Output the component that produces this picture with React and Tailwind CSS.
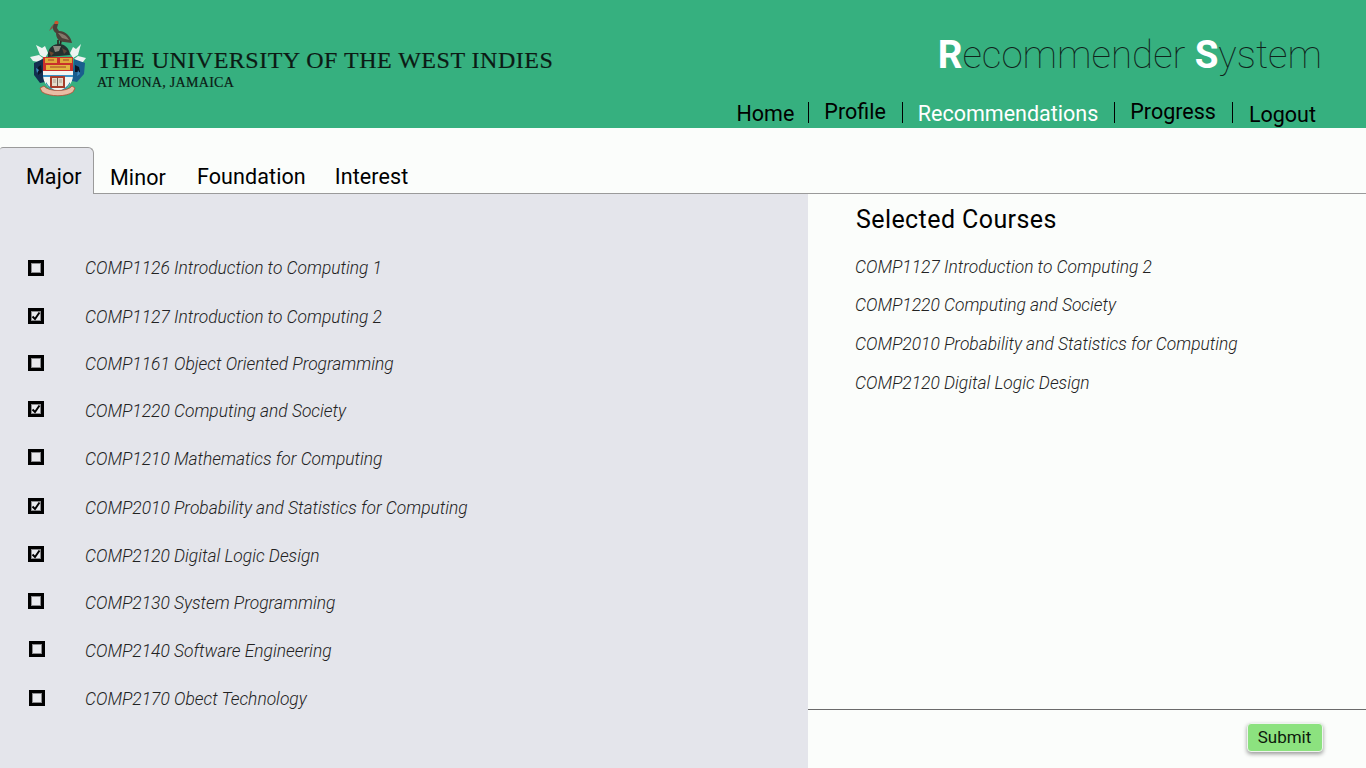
import React from 'react';

const courses = [
    { name: 'COMP1126 Introduction to Computing 1', row: 'h-[49px]', box: 'mt-[2px] ml-0 mr-[41px]' },
    { name: 'COMP1127 Introduction to Computing 2', row: 'h-[47px]', box: 'mt-[1px] ml-0 mr-[41px]', checked: true },
    { name: 'COMP1161 Object Oriented Programming', row: 'h-[47px]', box: 'mt-[1px] ml-0 mr-[41px]' },
    { name: 'COMP1220 Computing and Society', row: 'h-[48px]', box: 'mt-0 ml-0 mr-[41px]', checked: true },
    { name: 'COMP1210 Mathematics for Computing', row: 'h-[49px]', box: 'mt-0 ml-0 mr-[41px]' },
    { name: 'COMP2010 Probability and Statistics for Computing', row: 'h-[48px]', box: 'mt-0 ml-0 mr-[41px]', checked: true },
    { name: 'COMP2120 Digital Logic Design', row: 'h-[47px]', box: 'mt-0 ml-0 mr-[41px]', checked: true },
    { name: 'COMP2130 System Programming', row: 'h-[48px]', box: 'mt-0 ml-0 mr-[41px]' },
    { name: 'COMP2140 Software Engineering', row: 'h-[48px]', box: 'mt-0 ml-px mr-[40px]' },
    { name: 'COMP2170 Obect Technology', row: 'h-[48px]', box: 'mt-[1px] ml-px mr-[40px]' },
];

const selected = [
    { name: 'COMP1127 Introduction to Computing 2', row: 'h-[38px]' },
    { name: 'COMP1220 Computing and Society', row: 'h-[39px]' },
    { name: 'COMP2010 Probability and Statistics for Computing', row: 'h-[39px]' },
    { name: 'COMP2120 Digital Logic Design', row: 'h-[39px]' },
];

function Crest() {
    return (
        <svg width="60" height="80" viewBox="0 0 60 80" className="shrink-0">
            {/* pelican */}
            <path d="M28 1.5 L23 7 L21 11 L25 8 L29 5 Z" fill="#7a5a48" />
            <circle cx="28.5" cy="2.8" r="2.1" fill="#c9552c" />
            <path d="M26 4 C24 8 25 11 28 13 C28 18 31 22 36 22 L44 23 C43 17 38 11 31 11 L29 8 L30 4 Z" fill="#4b4038" />
            <path d="M30 13 C34 13 38 15 41 20 L34 18 Z" fill="#85786a" />
            <path d="M30 20 L30 26 M33 21 L32 26" stroke="#2c241e" strokeWidth="1.6" />
            {/* helm and wreath */}
            <path d="M20 33 C21 27 26 24 31 24 C37 24 41 28 42 35 L20 37 Z" fill="#25302f" />
            <path d="M25 26 L33 26 L31 31 L27 32 Z" fill="#8c8a80" />
            <path d="M34 28 L39 31 L36 34 Z" fill="#5c4a3c" />
            <path d="M21 31 L26 33 L23 36 Z" fill="#6e4630" />
            {/* doves and mantling */}
            <path d="M8 25 L14 28 L17 26 L20 33 L17 38 L12 35 Z" fill="#edf4f1" />
            <path d="M53 24 L48 29 L45 27 L42 33 L45 38 L50 35 Z" fill="#edf4f1" />
            <path d="M2 37 L11 35 L15 38 L11 42 L5 41 Z" fill="#eef3f2" />
            <path d="M58 38 L50 36 L46 39 L50 42 L55 42 Z" fill="#eef3f2" />
            <path d="M6 43 L15 39 L17 62 L12 63 L6 55 Z" fill="#132f50" />
            <path d="M57 43 L46 39 L44 61 L49 62 L56 54 Z" fill="#1a5e8d" />
            <path d="M10 47 L13 45 L14 52 L10 55 Z M51 47 L47 45 L47 52 L52 52 Z" fill="#0a1626" />
            <path d="M8 48 L11 50 L9 53 Z M52 54 L49 56 L50 50 Z" fill="#3f87bb" />
            {/* shield */}
            <path d="M15 37 H45 V55 C45 64 38 70 30 73 C22 70 15 64 15 55 Z" fill="#f4f5f0" />
            <path d="M15 37 H45 V51 H15 Z" fill="#c9302b" />
            <path d="M17 38 H29 V43 H17 Z M32 38 H44 V43 H32 Z" fill="#dfa93a" />
            <path d="M18 45 H42 V50 H18 Z" fill="#e3b441" />
            <path d="M20 40 H26 M35 40 H41 M22 47 H38" stroke="#a63a24" strokeWidth="1" />
            <path d="M15 55 H45 V57 H15 Z" fill="#3a93c8" />
            <path d="M22 56 H37 V68 H22 Z" fill="#a63d2b" />
            <path d="M24 58 H35 V66 H24 Z" fill="#e4dccb" />
            <path d="M29.5 58 V66" stroke="#6c5c50" strokeWidth="1" />
            <path d="M25 60 H28 M25 62 H28 M31 60 H34 M31 62 H34" stroke="#98877a" strokeWidth="0.7" />
            <path d="M18 62 C21 67 25 70 30 71 C35 70 39 67 42 62 L42 64 C38 70 34 72 30 73 C26 72 22 70 18 64 Z" fill="#2c8da6" />
            {/* motto */}
            <path d="M12 68 L16 66 C20 72 40 72 44 66 L47 68 L45 72 C38 77 22 77 14 72 Z" fill="#e9bda4" stroke="#b44a30" strokeWidth="0.8" />
        </svg>
    );
}

function Checkbox({ checked, className }) {
    return (
        <span className={`flex h-4 w-4 shrink-0 items-center justify-center border-[3px] border-black bg-[#e9eaee] shadow-[inset_0_0_0_1px_rgba(0,0,0,0.4)] ${className}`}>
            {checked && (
                <svg width="10" height="10" viewBox="0 0 10 10" className="shrink-0">
                    <path d="M1.5 5.5 L4 8 L8.5 1.5" fill="none" stroke="#000" strokeWidth="2" />
                </svg>
            )}
        </span>
    );
}

export default function App() {
    return (
        <div className="flex h-[768px] w-[1366px] flex-col overflow-hidden bg-[#fbfdfb] font-['Roboto',sans-serif] text-black">
            <header className="flex h-[128px] shrink-0 justify-between bg-[#36b07f]">
                <div className="flex items-start pl-[28px] pt-[20px]">
                    <Crest />
                    <div className="ml-[9px] mt-[27px] font-['Liberation_Serif',serif] text-[#0c1a14] [-webkit-text-stroke:0.2px_#0c1a14]">
                        <div className="text-[24px] leading-[26px] tracking-[0.5px]">THE UNIVERSITY OF THE WEST INDIES</div>
                        <div className="mt-[2px] text-[14px] leading-[16px] tracking-[0.3px]">AT MONA, JAMAICA</div>
                    </div>
                </div>
                <div className="flex flex-col items-end">
                    <div className="mr-[44px] mt-[30px] text-[38.5px] font-thin leading-[50px] text-[#10231b]">
                        <span className="font-bold text-white">R</span>ecommender <span className="font-bold text-white">S</span>ystem
                    </div>
                    <nav className="mr-[50px] mt-[19px] flex items-start text-[21.5px] leading-[26px]">
                        <span className="mt-[2px]">Home</span>
                        <span className="ml-[14px] mr-[15px] mt-[3px] h-[21px] w-px bg-black"></span>
                        <span>Profile</span>
                        <span className="ml-[16px] mr-[15px] mt-[3px] h-[21px] w-px bg-black"></span>
                        <span className="mt-[2px] text-white">Recommendations</span>
                        <span className="ml-[16px] mr-[15px] mt-[3px] h-[21px] w-px bg-black"></span>
                        <span>Progress</span>
                        <span className="mx-[16px] mt-[3px] h-[21px] w-px bg-black"></span>
                        <span className="mt-[3px]">Logout</span>
                    </nav>
                </div>
            </header>

            <div className="mt-[19px] flex h-[47px] shrink-0 items-start border-b border-[#9a9a9a] text-[21.5px] leading-[26px] tracking-[0.1px]">
                <div className="-mb-px h-[47px] w-[94px] rounded-tr-[6px] rounded-tl-[3px] border-r border-t border-[#9a9a9a] bg-[#e4e5eb] pl-[26px] pt-[16px]">Major</div>
                <div className="ml-[16px] pt-[18px]">Minor</div>
                <div className="ml-[31px] pt-[17px]">Foundation</div>
                <div className="ml-[29px] pt-[17px]">Interest</div>
            </div>

            <main className="flex min-h-0 flex-1">
                <section className="w-[808px] shrink-0 bg-[#e4e5eb] pt-[64px]">
                    {courses.map(course => (
                        <div key={course.name} className={`flex items-start pl-[28px] ${course.row}`}>
                            <Checkbox checked={course.checked} className={course.box} />
                            <span className="text-[17.4px] font-light italic leading-[20px] text-[#222]">{course.name}</span>
                        </div>
                    ))}
                </section>
                <section className="flex flex-1 flex-col">
                    <div className="flex-1 pl-[47px]">
                        <h2 className="ml-px pt-[9px] text-[25px] leading-[34px] tracking-[0.42px]">Selected Courses</h2>
                        <div className="mt-[20px]">
                            {selected.map(course => (
                                <div key={course.name} className={`text-[17.4px] font-light italic leading-[20px] text-[#222] ${course.row}`}>{course.name}</div>
                            ))}
                        </div>
                    </div>
                    <div className="flex h-[59px] shrink-0 items-start justify-end border-t border-[#6a6a6a] pr-[43px] pt-[13px]">
                        <button className="h-[29px] w-[76px] rounded-[4px] border border-[#eef4ee] bg-[#8ce27f] pb-[2px] pr-px text-[17px] leading-[22px] text-[#0c1a0c] shadow-[0_2px_4px_rgba(0,0,0,0.4)]">Submit</button>
                    </div>
                </section>
            </main>
        </div>
    );
}
